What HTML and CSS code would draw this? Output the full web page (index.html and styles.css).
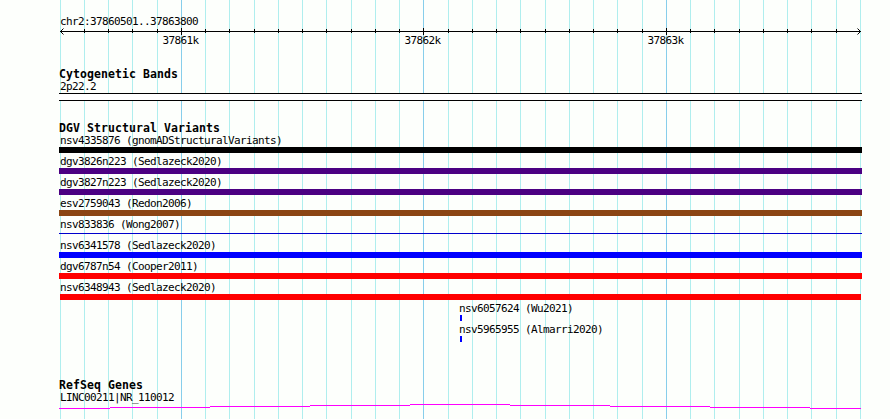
FILE: index.html
```
<!DOCTYPE html>
<html lang="en">
<head>
    <meta charset="UTF-8">
    <title>chr2:37860501..37863800</title>
    <link rel="stylesheet" href="styles.css">
</head>
<body>
    <div class="browser">
        <!-- Grid lines behind all the tracks -->
        <svg class="grid" width="890" height="419">
            <path class="minor" d="M60.5 0V419M84.5 0V419M108.5 0V419M132.5 0V419M157.5 0V419M205.5 0V419M229.5 0V419M254.5 0V419M278.5 0V419M302.5 0V419M326.5 0V419M351.5 0V419M375.5 0V419M399.5 0V419M448.5 0V419M472.5 0V419M496.5 0V419M520.5 0V419M545.5 0V419M569.5 0V419M593.5 0V419M617.5 0V419M642.5 0V419M690.5 0V419M714.5 0V419M739.5 0V419M763.5 0V419M787.5 0V419M811.5 0V419M836.5 0V419M860.5 0V419"/>
            <path class="major" d="M181.5 0V419M423.5 0V419M666.5 0V419"/>
        </svg>

        <!-- Scale -->
        <div class="scale">
            <div class="label">chr2:37860501..37863800</div>
            <svg class="ruler" width="803" height="20" viewBox="59 28 803 20">
                <path class="axis" d="M60 31.5H861M84.5 29V33M108.5 29V33M132.5 29V33M157.5 29V33M205.5 29V33M229.5 29V33M254.5 29V33M278.5 29V33M302.5 29V33M326.5 29V33M351.5 29V33M375.5 29V33M399.5 29V33M448.5 29V33M472.5 29V33M496.5 29V33M520.5 29V33M545.5 29V33M569.5 29V33M593.5 29V33M617.5 29V33M642.5 29V33M690.5 29V33M714.5 29V33M739.5 29V33M763.5 29V33M787.5 29V33M811.5 29V33M836.5 29V33M181.5 28V35M423.5 28V35M666.5 28V35"/>
                <path class="arrow" d="M63.5 28.5L60.5 31.5L63.5 34.5M857.5 28.5L860.5 31.5L857.5 34.5"/>
                <text x="162.5" y="44">37861k</text>
                <text x="404.5" y="44">37862k</text>
                <text x="647.5" y="44">37863k</text>
            </svg>
        </div>

        <!-- Cytogenetic bands -->
        <div class="track bands">
            <div class="title">Cytogenetic Bands</div>
            <div class="label">2p22.2</div>
            <div class="band"></div>
        </div>

        <!-- Structural variants -->
        <div class="track variants">
            <div class="title">DGV Structural Variants</div>
            <div class="variant">
                <div class="label">nsv4335876 (gnomADStructuralVariants)</div>
                <div class="bar black"></div>
            </div>
            <div class="variant">
                <div class="label">dgv3826n223 (Sedlazeck2020)</div>
                <div class="bar indigo"></div>
            </div>
            <div class="variant">
                <div class="label">dgv3827n223 (Sedlazeck2020)</div>
                <div class="bar indigo"></div>
            </div>
            <div class="variant">
                <div class="label">esv2759043 (Redon2006)</div>
                <div class="bar brown"></div>
            </div>
            <div class="variant">
                <div class="label">nsv833836 (Wong2007)</div>
                <div class="bar thin"></div>
            </div>
            <div class="variant">
                <div class="label">nsv6341578 (Sedlazeck2020)</div>
                <div class="bar blue"></div>
            </div>
            <div class="variant">
                <div class="label">dgv6787n54 (Cooper2011)</div>
                <div class="bar red"></div>
            </div>
            <div class="variant">
                <div class="label">nsv6348943 (Sedlazeck2020)</div>
                <div class="bar red inset"></div>
            </div>
            <div class="variant small">
                <div class="label">nsv6057624 (Wu2021)</div>
                <div class="bar blue"></div>
            </div>
            <div class="variant small">
                <div class="label">nsv5965955 (Almarri2020)</div>
                <div class="bar blue"></div>
            </div>
        </div>

        <!-- Genes -->
        <div class="track genes">
            <div class="title">RefSeq Genes</div>
            <div class="label">LINC00211|NR_110012</div>
            <svg class="gene" width="803" height="5" viewBox="59 404 803 5">
                <path d="M59 408.5H110M110 407.5H210M210 406.5H310M310 405.5H410M410 404.5H510M510 405.5H610M610 406.5H710M710 407.5H810M810 408.5H861"/>
            </svg>
        </div>
    </div>
</body>
</html>
```
FILE: styles.css
```
body {
    margin: 0;
    background-color: #fdfffc;
    font-family: "DejaVu Sans Mono", monospace;
    font-size: 11px;
    line-height: 13px;
    color: #000;
}

.browser {
    position: relative;
    box-sizing: border-box;
    width: 890px;
    height: 419px;
    padding: 15px 28px 0 59px;
    overflow: hidden;
}

.grid {
    position: absolute;
    top: 0;
    left: 0;
    z-index: -1;
    shape-rendering: crispEdges;
}

.minor {
    stroke: #afeeee;
}

.major {
    stroke: #87ceeb;
}

.label {
    height: 13px;
    padding-left: 1px;
    letter-spacing: -0.62px;
    white-space: pre;
}

.title {
    height: 12px;
    font-size: 11.5px;
    font-weight: bold;
    letter-spacing: 0.077px;
    white-space: pre;
}

/* Scale */
.ruler {
    display: block;
    letter-spacing: -0.62px;
}

.axis {
    stroke: #000;
    shape-rendering: crispEdges;
}

.arrow {
    fill: none;
    stroke: #000;
}

/* Tracks */
.bands {
    margin-top: 20px;
}

.band {
    height: 6px;
    background-color: #fff;
    border-top: 1px solid #000;
    border-bottom: 1px solid #000;
}

.variants {
    margin-top: 21px;
}

.variant {
    height: 21px;
}

.bar {
    height: 6px;
}

.inset {
    margin: 0 1px;
}

.small {
    margin-left: 399px;
}

.small .bar {
    width: 2px;
    margin-left: 2px;
}

.black {
    background-color: #000;
}

.indigo {
    background-color: #4b0082;
}

.brown {
    background-color: #8b4513;
}

.blue {
    background-color: #0000ff;
}

.red {
    background-color: #ff0000;
}

.thin {
    position: relative;
    top: 2px;
    height: 1px;
    background-color: #0000cd;
}

.genes {
    margin-top: 35px;
}

.gene {
    display: block;
    fill: none;
    stroke: #ff00ff;
    shape-rendering: crispEdges;
}
```
